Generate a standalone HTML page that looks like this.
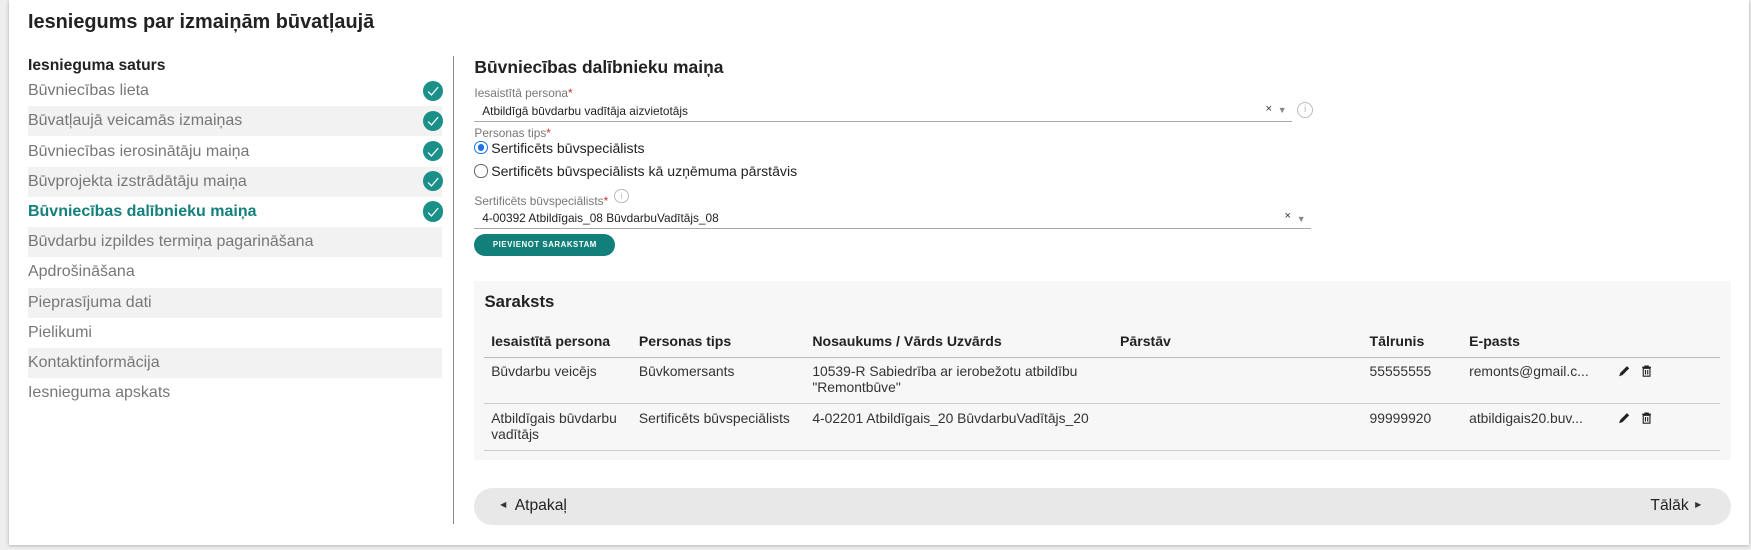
<!DOCTYPE html>
<html><head><meta charset="utf-8"><style>
html,body{margin:0;padding:0;width:1751px;height:550px;overflow:hidden;background:#eee;}
#z{zoom:1.1189;position:relative;width:1565px;height:492px;font-family:"Liberation Sans",Arial,sans-serif;}
.card{position:absolute;left:8px;top:0;width:1555px;height:487px;background:#fff;box-shadow:0 1px 3px rgba(0,0,0,.3);}
.a{position:absolute;white-space:nowrap;}
.title{left:25px;top:10px;font-size:17.8px;font-weight:bold;color:#222;}
.nav{left:25px;width:370px;height:27px;line-height:27px;font-size:14.3px;color:#777;}
.nav.g{background:#f2f2f2;}
.nav.act{color:#13807b;font-weight:bold;}
.chk{position:absolute;right:-1px;top:4px;width:18px;height:18px;border-radius:50%;background:#1a9088;}
.chk svg{position:absolute;left:4px;top:5px;}
.lbl{font-size:10.6px;color:#777;}
.lbl b{color:#c0392b;font-weight:normal;}
.val{font-size:10.6px;color:#222;}
.line{height:1px;background:#aaa;}
.th{font-size:12.6px;font-weight:bold;color:#222;}
.td{font-size:12.4px;color:#333;line-height:15px;}
</style></head><body><div id="z">
<div class="card"></div>
<div class="a title">Iesniegums par izmaiņām būvatļaujā</div>
<div class="a" style="left:25px;top:51px;font-size:14px;font-weight:bold;color:#222">Iesnieguma saturs</div>

<div class="a nav" style="top:68px">Būvniecības lieta<span class="chk"><svg width="11" height="9"><path d="M1 5 L4 8 L10 1" stroke="#fff" stroke-width="1.1" fill="none"/></svg></span></div>
<div class="a nav g" style="top:95px">Būvatļaujā veicamās izmaiņas<span class="chk"><svg width="11" height="9"><path d="M1 5 L4 8 L10 1" stroke="#fff" stroke-width="1.1" fill="none"/></svg></span></div>
<div class="a nav" style="top:122px">Būvniecības ierosinātāju maiņa<span class="chk"><svg width="11" height="9"><path d="M1 5 L4 8 L10 1" stroke="#fff" stroke-width="1.1" fill="none"/></svg></span></div>
<div class="a nav g" style="top:149px">Būvprojekta izstrādātāju maiņa<span class="chk"><svg width="11" height="9"><path d="M1 5 L4 8 L10 1" stroke="#fff" stroke-width="1.1" fill="none"/></svg></span></div>
<div class="a nav act" style="top:176px">Būvniecības dalībnieku maiņa<span class="chk"><svg width="11" height="9"><path d="M1 5 L4 8 L10 1" stroke="#fff" stroke-width="1.1" fill="none"/></svg></span></div>
<div class="a nav g" style="top:203px">Būvdarbu izpildes termiņa pagarināšana</div>
<div class="a nav" style="top:230px">Apdrošināšana</div>
<div class="a nav g" style="top:257px">Pieprasījuma dati</div>
<div class="a nav" style="top:284px">Pielikumi</div>
<div class="a nav g" style="top:311px">Kontaktinformācija</div>
<div class="a nav" style="top:338px">Iesnieguma apskats</div>

<div class="a" style="left:405px;top:50px;width:1px;height:418px;background:#888"></div>

<div class="a" style="left:424px;top:51px;font-size:15.6px;font-weight:bold;color:#222">Būvniecības dalībnieku maiņa</div>
<div class="a lbl" style="left:424px;top:77px">Iesaistītā persona<b>*</b></div>
<div class="a val" style="left:431px;top:93px">Atbildīgā būvdarbu vadītāja aizvietotājs</div>
<div class="a" style="left:1131px;top:92px;font-size:10px;color:#333">×</div>
<div class="a" style="left:1142px;top:94px;font-size:8px;color:#888">▼</div>
<div class="a line" style="left:424px;top:108px;width:731px"></div>
<div class="a" style="left:1159px;top:91px;width:13px;height:13px;border:1px solid #bbb;border-radius:50%;font-size:9px;color:#bbb;text-align:center;line-height:13px">i</div>

<div class="a lbl" style="left:424px;top:113px">Personas tips<b>*</b></div>
<div class="a" style="left:424px;top:126px;width:10px;height:10px;border:1px solid #1a73e8;border-radius:50%;"><div style="margin:2px;width:6px;height:6px;border-radius:50%;background:#1a73e8"></div></div>
<div class="a" style="left:439px;top:125px;font-size:12.6px;color:#222">Sertificēts būvspeciālists</div>
<div class="a" style="left:424px;top:147px;width:10px;height:10px;border:1px solid #666;border-radius:50%;"></div>
<div class="a" style="left:439px;top:146px;font-size:12.6px;color:#222">Sertificēts būvspeciālists kā uzņēmuma pārstāvis</div>

<div class="a lbl" style="left:424px;top:173px">Sertificēts būvspeciālists<b>*</b></div>
<div class="a" style="left:549px;top:169px;width:11px;height:11px;border:1px solid #bbb;border-radius:50%;font-size:8px;color:#bbb;text-align:center;line-height:11px">i</div>
<div class="a val" style="left:431px;top:189px">4-00392 Atbildīgais_08 BūvdarbuVadītājs_08</div>
<div class="a" style="left:1148px;top:188px;font-size:10px;color:#333">×</div>
<div class="a" style="left:1159px;top:191px;font-size:8px;color:#888">▼</div>
<div class="a line" style="left:424px;top:204px;width:748px"></div>
<div class="a" style="left:424px;top:209px;width:126px;height:20px;border-radius:10px;background:#137f7a;color:#fff;font-size:7px;font-weight:bold;text-align:center;line-height:20px;letter-spacing:.5px">PIEVIENOT SARAKSTAM</div>

<div class="a" style="left:424px;top:251px;width:1123px;height:160px;background:#f7f7f7"></div>
<div class="a" style="left:433px;top:261px;font-size:15px;font-weight:bold;color:#222">Saraksts</div>
<div class="a th" style="left:439px;top:298px">Iesaistītā persona</div>
<div class="a th" style="left:571px;top:298px">Personas tips</div>
<div class="a th" style="left:726px;top:298px">Nosaukums / Vārds Uzvārds</div>
<div class="a th" style="left:1001px;top:298px">Pārstāv</div>
<div class="a th" style="left:1224px;top:298px">Tālrunis</div>
<div class="a th" style="left:1313px;top:298px">E-pasts</div>
<div class="a" style="left:433px;top:319px;width:1104px;height:1px;background:#bbb"></div>
<div class="a td" style="left:439px;top:324px">Būvdarbu veicējs</div>
<div class="a td" style="left:571px;top:324px">Būvkomersants</div>
<div class="a td" style="left:726px;top:324px">10539-R Sabiedrība ar ierobežotu atbildību<br>"Remontbūve"</div>
<div class="a td" style="left:1224px;top:324px">55555555</div>
<div class="a td" style="left:1313px;top:324px">remonts@gmail.c...</div>
<div class="a" style="left:433px;top:360px;width:1104px;height:1px;background:#ccc"></div>
<div class="a td" style="left:439px;top:366px">Atbildīgais būvdarbu<br>vadītājs</div>
<div class="a td" style="left:571px;top:366px">Sertificēts būvspeciālists</div>
<div class="a td" style="left:726px;top:366px">4-02201 Atbildīgais_20 BūvdarbuVadītājs_20</div>
<div class="a td" style="left:1224px;top:366px">99999920</div>
<div class="a td" style="left:1313px;top:366px">atbildigais20.buv...</div>
<div class="a" style="left:433px;top:402px;width:1104px;height:1px;background:#ccc"></div>

<svg class="a" style="left:1446px;top:326px" width="11" height="11"><path d="M1 10 L2 7 L8 1 L10 3 L4 9 Z" fill="#222"/></svg>
<svg class="a" style="left:1467px;top:326px" width="10" height="11"><path d="M1 2 H9 M3.5 2 V1 H6.5 V2 M2 3 H8 V10 H2 Z M4 4.5 V8.5 M6 4.5 V8.5" stroke="#222" fill="none"/></svg>
<svg class="a" style="left:1446px;top:368px" width="11" height="11"><path d="M1 10 L2 7 L8 1 L10 3 L4 9 Z" fill="#222"/></svg>
<svg class="a" style="left:1467px;top:368px" width="10" height="11"><path d="M1 2 H9 M3.5 2 V1 H6.5 V2 M2 3 H8 V10 H2 Z M4 4.5 V8.5 M6 4.5 V8.5" stroke="#222" fill="none"/></svg>

<div class="a" style="left:424px;top:436px;width:1123px;height:33px;border-radius:17px;background:#e8e8e8"></div>
<div class="a" style="left:447px;top:447px;font-size:7px;color:#333">◀</div>
<div class="a" style="left:460px;top:444px;font-size:14px;color:#222">Atpakaļ</div>
<div class="a" style="left:1475px;top:444px;font-size:14px;color:#222">Tālāk</div>
<div class="a" style="left:1515px;top:447px;font-size:7px;color:#333">▶</div>
</div></body></html>
